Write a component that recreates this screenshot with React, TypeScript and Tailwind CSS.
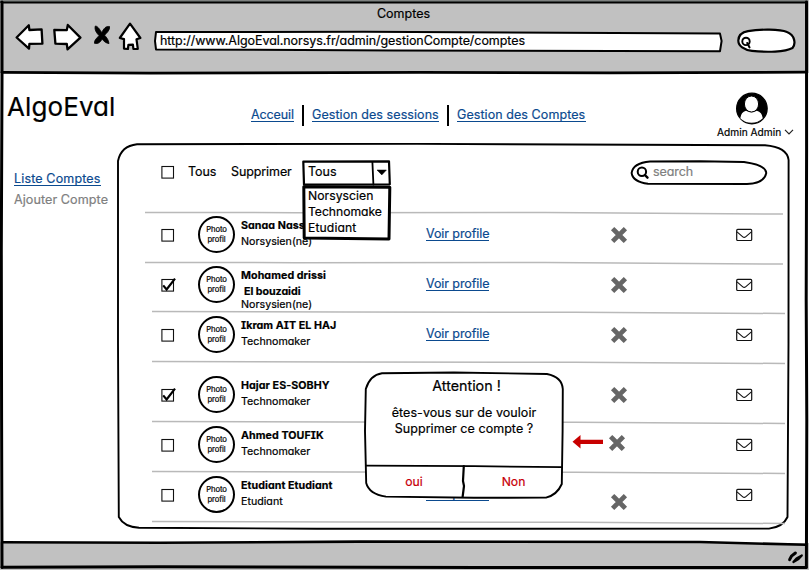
import React from "react";

const stroke = { fill: "none", stroke: "#000", strokeLinecap: "round", strokeLinejoin: "round" } as const;

function BrowserFrame() {
  return (
    <svg className="pointer-events-none absolute inset-0 z-30" width="809" height="570" viewBox="0 0 809 570">
      <path d="M0 1.7H808" stroke="#3d4240" strokeWidth="2.6" fill="none" />
      <path d="M1 2.7H808" stroke="#000" strokeWidth="1.6" fill="none" />
      <path d="M2 2V80L1.3 250L1.6 420L2 567.5" {...stroke} strokeWidth="3" />
      <path d="M806.5 2L806.6 150L806.2 300L806.8 420L806.4 567.5" {...stroke} strokeWidth="3" />
      <path d="M2 72.3L150 73.2L420 72.4L610 72.9L806 72.2" {...stroke} strokeWidth="2.8" />
      <path d="M2 542.2L160 542.8L360 541.6L700 542L806 544.8" {...stroke} strokeWidth="2.6" />
      <path d="M2 567.3L160 566.7L480 567.6L806 567.4" {...stroke} strokeWidth="3" />
    </svg>
  );
}

function Toolbar() {
  return (
    <div className="flex items-start pl-[14px]">
      <svg width="30" height="29" viewBox="0 0 30 29">
        <path d="M2.6 15.5L14.8 3.3L15.4 8L27.6 7.4L28.4 21.6L15.4 21.8L15 26.6Z" {...stroke} fill="#fff" strokeWidth="2.3" />
      </svg>
      <svg className="ml-[8px]" width="30" height="29" viewBox="0 0 30 29">
        <path d="M2.3 8L14.8 8.1L15.8 3L28.4 15.6L15.5 27.4L14.8 22L3.4 21.6Z" {...stroke} fill="#fff" strokeWidth="2.3" />
      </svg>
      <svg className="ml-3" width="16" height="29" viewBox="0 0 16 29">
        <path d="M1.3 4C3.8 4 6 8 7.8 10.5C9.5 7 11.8 3.5 15.8 4.7C15.5 9 12.5 11 10.6 13.2C12.5 15.5 14.6 17.5 15 21.6C11.5 21 9.8 19 8 17.2C6.4 20 4.3 22.3 0.4 21.3C0.3 17.5 3.3 16 5 13.5C2.6 11.1 .2 7.8 1.3 4Z" fill="#000" stroke="#000" strokeWidth=".8" />
      </svg>
      <svg className="ml-2" width="26" height="29" viewBox="0 0 26 29">
        <path d="M12 1.6L22.4 16L18.5 17.3L19.8 26.9L15.4 27L14.9 22.6L10.4 22.8L9.9 27L6 26.6L6 17.1L1.8 16Z" {...stroke} fill="#fff" strokeWidth="2.2" />
      </svg>
      <div className="relative ml-[10px] mt-[8px] h-[22px] w-[568px]">
        <svg className="absolute inset-0" width="569" height="23" viewBox="0 0 569 23">
          <path d="M2 2L210 1.8L566 3.6L567.6 11L566 21.2L240 20.4L2 19.4L1 11Z" {...stroke} fill="#fff" strokeWidth="2" />
        </svg>
        <p className="relative ml-[6px] mt-[3px] whitespace-nowrap text-[12.5px] leading-4 tracking-[-0.05px]">
          http://www.AlgoEval.norsys.fr/admin/gestionCompte/comptes
        </p>
      </div>
      <svg className="ml-[14px] mt-[6px]" width="61" height="26" viewBox="0 0 61 26">
        <path d="M12 3.2C24 1 44 1 51 4C59 7 60 16 56.5 20C49 24 31 24.5 16 22.8C8 22 2.3 18 2.3 12.5C2.5 8 6 4.3 12 3.2Z" {...stroke} fill="#fff" strokeWidth="2.2" />
        <circle cx="10" cy="13.4" r="3.7" {...stroke} strokeWidth="1.9" />
        <path d="M11.3 15L13.5 19.4" {...stroke} strokeWidth="2.1" />
      </svg>
    </div>
  );
}

function NavLink({ children, className = "" }: { children: React.ReactNode; className?: string }) {
  return (
    <a className={`block h-[16px] whitespace-nowrap border-b border-[#0b4a8f] text-[12.5px] leading-[17px] text-[#0b4a8f] ${className}`}>
      {children}
    </a>
  );
}

function Checkbox({ checked = false }: { checked?: boolean }) {
  return (
    <svg className="shrink-0" width="16" height="16" viewBox="0 0 16 16">
      <rect x="1.9" y="2.5" width="11.6" height="11.6" fill="#fff" stroke="#111" strokeWidth="1.1" />
      {checked && <path d="M3.2 8.4L6.6 12.4L15 1.6" fill="none" stroke="#000" strokeWidth="2.2" />}
    </svg>
  );
}

function Rule({ wide = false }: { wide?: boolean }) {
  return (
    <svg className="absolute left-0 top-[-2px]" width="642" height="6" viewBox="0 0 642 6">
      <path d={wide ? "M0 2.4L150 2.7L400 2.6L638 4" : "M7 1.6L200 2L430 2.3L640 3.5"} fill="none" stroke="#b9b9b9" strokeWidth="1.5" />
    </svg>
  );
}

function Cross() {
  return (
    <svg width="18" height="18" viewBox="0 0 18 18">
      <path d="M4 4L14 14M14 4L4 14" stroke="#666" strokeWidth="4.9" strokeLinecap="square" fill="none" transform="translate(.45 .45) scale(.95)" />
    </svg>
  );
}

function Envelope() {
  return (
    <svg width="17" height="14" viewBox="0 0 17 14">
      <rect x=".7" y="1.4" width="15" height="11.1" rx="1" fill="none" stroke="#111" strokeWidth="1.2" />
      <path d="M1 3.8L6.8 8.8Q8.2 10 9.6 8.8L15.4 3.8" fill="none" stroke="#111" strokeWidth="1.1" />
    </svg>
  );
}

type Account = {
  name: string;
  second?: string;
  role: string;
  checked?: boolean;
  rowClass: string;
  crossClass: string;
};

const accounts: Account[] = [
  { name: "Sanaa Nass", role: "Norsysien(ne)", rowClass: "h-[50px]", crossClass: "ml-[121px] mt-[14px]" },
  { name: "Mohamed drissi", second: "El bouzaidi", role: "Norsysien(ne)", checked: true, rowClass: "h-[50px]", crossClass: "ml-[121px] mt-[14px]" },
  { name: "Ikram AIT EL HAJ", role: "Technomaker", rowClass: "h-[50px]", crossClass: "ml-[121px] mt-[14px]" },
  { name: "Hajar ES-SOBHY", role: "Technomaker", checked: true, rowClass: "h-[60px] pt-[10px]", crossClass: "ml-[121px] mt-[14px]" },
  { name: "Ahmed TOUFIK", role: "Technomaker", rowClass: "h-[50px]", crossClass: "ml-[119px] mr-[2px] mt-[12px]" },
  { name: "Etudiant Etudiant", role: "Etudiant", rowClass: "h-[50px]", crossClass: "ml-[121px] mt-[21px]" },
];

function AccountRow({ account, index }: { account: Account; index: number }) {
  return (
    <li className={`relative flex items-start ${account.rowClass}`}>
      <Rule wide={index < 2} />
      <div className="ml-[15px] mt-[15px]">
        <Checkbox checked={account.checked} />
      </div>
      <div className="ml-[22px] mt-[4px] flex h-[37px] w-[37px] flex-col items-center justify-center rounded-full border-2 border-black pt-px text-[7.7px] leading-[10px] tracking-[-0.1px]">
        <span>Photo</span>
        <span>profil</span>
      </div>
      <div className="ml-[6px] mt-[6px] w-[185px] whitespace-nowrap text-[10.7px] leading-4">
        <p className="font-bold tracking-[0.06px]">{account.name}</p>
        {account.second && <p className="pl-[3px] font-bold tracking-[-0.05px]">{account.second}</p>}
        <p className={account.second ? "-mt-[3px]" : ""}>{account.role}</p>
      </div>
      <NavLink className="mt-[13px] w-[63px] tracking-[-0.08px]">Voir profile</NavLink>
      <div className={account.crossClass}>
        <Cross />
      </div>
      <div className="ml-[108px] mt-4">
        <Envelope />
      </div>
    </li>
  );
}

function RoleSelect() {
  return (
    <div className="relative z-10 ml-[9px] h-[26px] w-[90px]">
      <svg className="absolute inset-0" width="91" height="82" viewBox="0 0 91 82">
        <path d="M2.3 1.6L88 1.4L88.8 24.3L3 24.6Z" {...stroke} fill="#fff" strokeWidth="2.2" />
        <path d="M71.4 2L72.4 24.5" {...stroke} strokeWidth="1.8" />
        <path d="M76 10L85.4 10L80.8 14.9Z" fill="#000" stroke="#000" strokeWidth=".5" />
        <path d="M2.8 26.8L88.8 27.2L88 79L3.2 78Z" {...stroke} fill="#fff" strokeWidth="3" />
      </svg>
      <p className="relative ml-[7px] mt-[4px] text-[12.5px] leading-4">Tous</p>
      <ul className="relative ml-[7px] mt-2 text-[12.2px] leading-4">
        <li className="tracking-[0.05px]">Norsyscien</li>
        <li className="tracking-[-0.05px]">Technomake</li>
        <li className="tracking-[0.1px]">Etudiant</li>
      </ul>
    </div>
  );
}

function ConfirmDialog() {
  return (
    <div className="absolute left-[247px] top-[228px] z-20 h-[128px] w-[202px] text-center">
      <svg className="absolute inset-0" width="202" height="128" viewBox="0 0 202 128">
        <path d="M18 2.3L90 1.5L183 3Q198 6 198.8 18L198.6 60L197.8 113Q193 124 182 126.6L110 126.8L22 125.6Q5 123 2.2 112L1 60L1.8 18Q6 4 18 2.3Z" {...stroke} fill="#fff" strokeWidth="1.9" />
        <path d="M2 94.7L110 95.2L198 96.2" {...stroke} strokeWidth="1.8" />
        <path d="M99.8 95L99 110L100 115L98.6 126" {...stroke} strokeWidth="2.2" />
      </svg>
      <div className="relative flex h-[94px] flex-col">
        <h2 className="mt-[6px] pl-[3px] text-[14.3px] leading-[18px]">Attention !</h2>
        <p className="mt-[10px] whitespace-nowrap pr-[2px] text-[12.5px] leading-4 tracking-[0.05px]">
          êtes-vous sur de vouloir
          <br />
          Supprimer ce compte ?
        </p>
      </div>
      <div className="relative flex pt-[9px] text-[12.2px] leading-4 text-[#c8000a]">
        <span className="w-[100px]">oui</span>
        <span className="w-[99px]">Non</span>
      </div>
    </div>
  );
}

export default function App() {
  return (
    <div className="relative flex h-[570px] w-[809px] flex-col overflow-hidden bg-white font-['Inter','Liberation_Sans',sans-serif] text-black [-webkit-text-stroke:0.2px] [font-feature-settings:'cv11','cv08']">
      <BrowserFrame />
      <header className="h-[73px] bg-[#c1c1c1] pt-[6px]">
        <h1 className="pr-[2px] text-center text-[12.5px] leading-4">Comptes</h1>
        <Toolbar />
      </header>

      <main className="h-[470px]">
        <div className="flex h-[70px] items-start">
          <div className="ml-[7px] mt-[18px] w-[244px] text-[26px] leading-8 tracking-[0.1px]">AlgoEval</div>
          <nav className="mt-8 flex items-start">
            <NavLink className="mt-px w-[43px] tracking-[-0.1px]">Acceuil</NavLink>
            <i className="mx-[8px] h-[21px] w-[2px] bg-black" />
            <NavLink className="mt-px w-[127px] tracking-[0.07px]">Gestion des sessions</NavLink>
            <i className="mx-[8px] h-[21px] w-[2px] bg-black" />
            <NavLink className="mt-px w-[129px] tracking-[0.07px]">Gestion des Comptes</NavLink>
          </nav>
          <div className="ml-[130px] mt-[19px] flex w-[78px] flex-col">
            <svg className="ml-[19px]" width="33" height="33" viewBox="0 0 33 33">
              <circle cx="16.9" cy="16.5" r="15.3" fill="#000" stroke="#000" strokeWidth="1.2" />
              <path d="M5.3 26.2Q6 20 11 18.7Q16.4 22 21.8 18.7Q27 20 27.8 26.2Q23 30.8 16.5 30.8Q10 30.8 5.3 26.2Z" fill="#fff" />
              <ellipse cx="16.5" cy="12" rx="7.1" ry="8" fill="#fff" stroke="#000" strokeWidth="1" />
            </svg>
            <div className="mt-[-1px] flex items-center">
              <span className="w-[64px] whitespace-nowrap pl-px text-[10.2px] leading-4">Admin Admin</span>
              <svg className="ml-[4px] shrink-0" width="10" height="6" viewBox="0 0 10 6">
                <path d="M1 .8L5 4.8L9 .8" fill="none" stroke="#222" strokeWidth="1.2" />
              </svg>
            </div>
          </div>
        </div>

        <div className="flex">
          <aside className="w-[117px] pl-[14px] pt-[27px]">
            <NavLink className="w-[87px] tracking-[0.15px]">Liste Comptes</NavLink>
            <a className="mt-[6px] block whitespace-nowrap text-[12.6px] leading-4 tracking-[0.06px] text-[#808080]">Ajouter Compte</a>
          </aside>

          <section className="relative h-[388px] w-[673px]">
            <svg className="absolute inset-0" width="673" height="388" viewBox="0 0 673 388">
              <path d="M20 1.2L300 .9L648 2.3Q670 4 671.6 17L671.5 200L670.5 374Q666 384 652 385.6L200 385.8L22 384.7Q7 384 1.8 374L1 200L1 18Q4 3 20 1.2Z" {...stroke} strokeWidth="1.9" />
            </svg>
            <div className="relative flex h-[69px] items-start pt-[17px] text-[12.5px] leading-4">
              <div className="ml-[43px] mt-[4px]">
                <Checkbox />
              </div>
              <span className="ml-[12px] mt-[4px] w-[43px] tracking-[-0.1px]">Tous</span>
              <span className="mt-[4px] w-[61px] tracking-[-0.1px]">Supprimer</span>
              <RoleSelect />
              <div className="relative ml-[239px] flex h-[26px] w-[138px] items-center">
                <svg className="absolute inset-0" width="138" height="26" viewBox="0 0 138 26">
                  <path d="M20 1.5L70 1.2L114 2Q136 5 136.3 13Q134 23.6 117 24L18 23.7Q3 22 1.6 13Q3 3 20 1.5Z" {...stroke} fill="#fff" strokeWidth="1.9" />
                  <circle cx="11.9" cy="11.8" r="4.2" {...stroke} strokeWidth="2" />
                  <path d="M14.9 15L17.5 17.7" {...stroke} strokeWidth="2.4" />
                </svg>
                <span className="relative mb-[2px] ml-[23px] tracking-[-0.1px] text-[#808080]">search</span>
              </div>
            </div>
            <ul className="relative ml-7">
              {accounts.map((a, i) => (
                <AccountRow key={a.name} account={a} index={i} />
              ))}
              <li className="relative h-0">
                <Rule />
              </li>
            </ul>
            <svg className="absolute left-[455px] top-[291px]" width="32" height="16" viewBox="0 0 32 16">
              <path d="M.5 7.7L8.5 1V5.8H31V10H8.5V14.5Z" fill="#c80000" />
            </svg>
            <ConfirmDialog />
          </section>
        </div>
      </main>

      <footer className="flex h-[27px] justify-end bg-[#c1c1c1]">
        <svg className="mr-[4px] mt-[6px]" width="18" height="18" viewBox="0 0 18 18">
          <path d="M2.6 10.6L4.4 7.2L8.4 4" {...stroke} strokeWidth="3" />
          <path d="M6.4 13L9.5 9.4L14.8 6.4L11.5 10Z" {...stroke} fill="#000" strokeWidth="2.2" />
        </svg>
      </footer>
    </div>
  );
}
